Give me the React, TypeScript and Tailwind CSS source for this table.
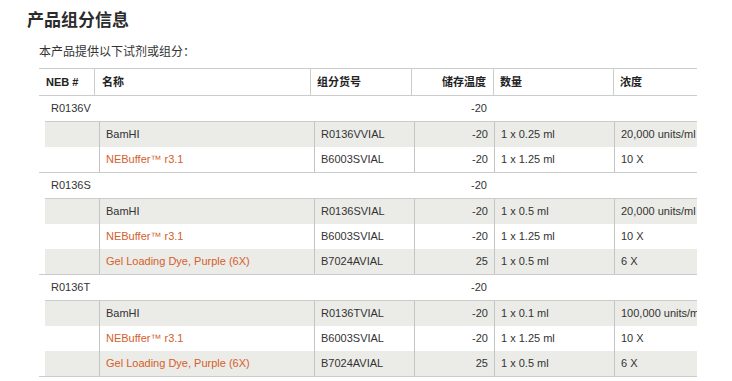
const groups = [
  {
    id: "R0136V",
    temp: "-20",
    items: [
      { name: "BamHI", link: false, code: "R0136VVIAL", temp: "-20", qty: "1 x 0.25 ml", conc: "20,000 units/ml" },
      { name: "NEBuffer™ r3.1", link: true, code: "B6003SVIAL", temp: "-20", qty: "1 x 1.25 ml", conc: "10 X" },
    ],
  },
  {
    id: "R0136S",
    temp: "-20",
    items: [
      { name: "BamHI", link: false, code: "R0136SVIAL", temp: "-20", qty: "1 x 0.5 ml", conc: "20,000 units/ml" },
      { name: "NEBuffer™ r3.1", link: true, code: "B6003SVIAL", temp: "-20", qty: "1 x 1.25 ml", conc: "10 X" },
      { name: "Gel Loading Dye, Purple (6X)", link: true, code: "B7024AVIAL", temp: "25", qty: "1 x 0.5 ml", conc: "6 X" },
    ],
  },
  {
    id: "R0136T",
    temp: "-20",
    items: [
      { name: "BamHI", link: false, code: "R0136TVIAL", temp: "-20", qty: "1 x 0.1 ml", conc: "100,000 units/ml" },
      { name: "NEBuffer™ r3.1", link: true, code: "B6003SVIAL", temp: "-20", qty: "1 x 1.25 ml", conc: "10 X" },
      { name: "Gel Loading Dye, Purple (6X)", link: true, code: "B7024AVIAL", temp: "25", qty: "1 x 0.5 ml", conc: "6 X" },
    ],
  },
]

export default function App() {
  return (
    <div className="w-[732px] h-[381px] overflow-hidden bg-white text-[#333] font-['Liberation_Sans','Noto_Sans_CJK_SC',sans-serif]">
      <h2 className="pl-[27px] pt-[10px] text-[17px] leading-[22px] font-bold text-[#2b2b2b]">产品组分信息</h2>
      <p className="pl-[39px] mt-[12px] text-[12px] leading-[16px]">本产品提供以下试剂或组分：</p>

      {/* Components table, cut off on the right */}
      <div className="ml-[39px] mt-[8px] w-[658px] overflow-hidden text-[11px]">
        <div className="w-[780px] border-t border-[#ccc]">
          {/* Header */}
          <div className="flex h-[27px] items-center border-b border-[#ccc] font-bold text-[#222]">
            <div className="w-[55px] h-full flex items-center pl-[7px]">NEB #</div>
            <div className="w-[216px] h-full flex items-center pl-[7px] border-l border-[#ccc]">名称</div>
            <div className="w-[101px] h-full flex items-center pl-[6px] border-l border-[#ccc]">组分货号</div>
            <div className="w-[82px] h-full flex items-center justify-end pr-[7px] border-l border-[#ccc]">储存温度</div>
            <div className="w-[120px] h-full flex items-center pl-[6px] border-l border-[#ccc]">数量</div>
            <div className="flex-1 h-full flex items-center pl-[6px] border-l border-[#ccc]">浓度</div>
          </div>

          {groups.map((g) => (
            <div key={g.id} className="border-b border-[#ccc]">
              <div className="flex h-[25px] items-center">
                <div className="w-[55px] pl-[12px]">{g.id}</div>
                <div className="w-[216px]" />
                <div className="w-[101px]" />
                <div className="w-[82px] text-right pr-[6px]">{g.temp}</div>
              </div>
              <div className="ml-[6px] border-t border-[#ccc]">
                {g.items.map((it, i) => (
                  <div key={i} className={`flex h-[25px] ${i % 2 === 0 ? "bg-[#ebebe7]" : "bg-white"}`}>
                    <div className="w-[54px]" />
                    <div className="w-[215px] flex items-center pl-[6px] border-l border-[#c4c4c4]">
                      <span className={it.link ? "text-[#d4602a]" : ""}>{it.name}</span>
                    </div>
                    <div className="w-[100px] flex items-center pl-[6px] border-l border-[#c4c4c4]">{it.code}</div>
                    <div className="w-[80px] flex items-center justify-end pr-[6px] border-l border-[#c4c4c4]">{it.temp}</div>
                    <div className="w-[120px] flex items-center pl-[6px] border-l border-[#c4c4c4]">{it.qty}</div>
                    <div className="flex-1 flex items-center pl-[6px] border-l border-[#c4c4c4] whitespace-nowrap">{it.conc}</div>
                  </div>
                ))}
              </div>
            </div>
          ))}
        </div>
      </div>
    </div>
  )
}
